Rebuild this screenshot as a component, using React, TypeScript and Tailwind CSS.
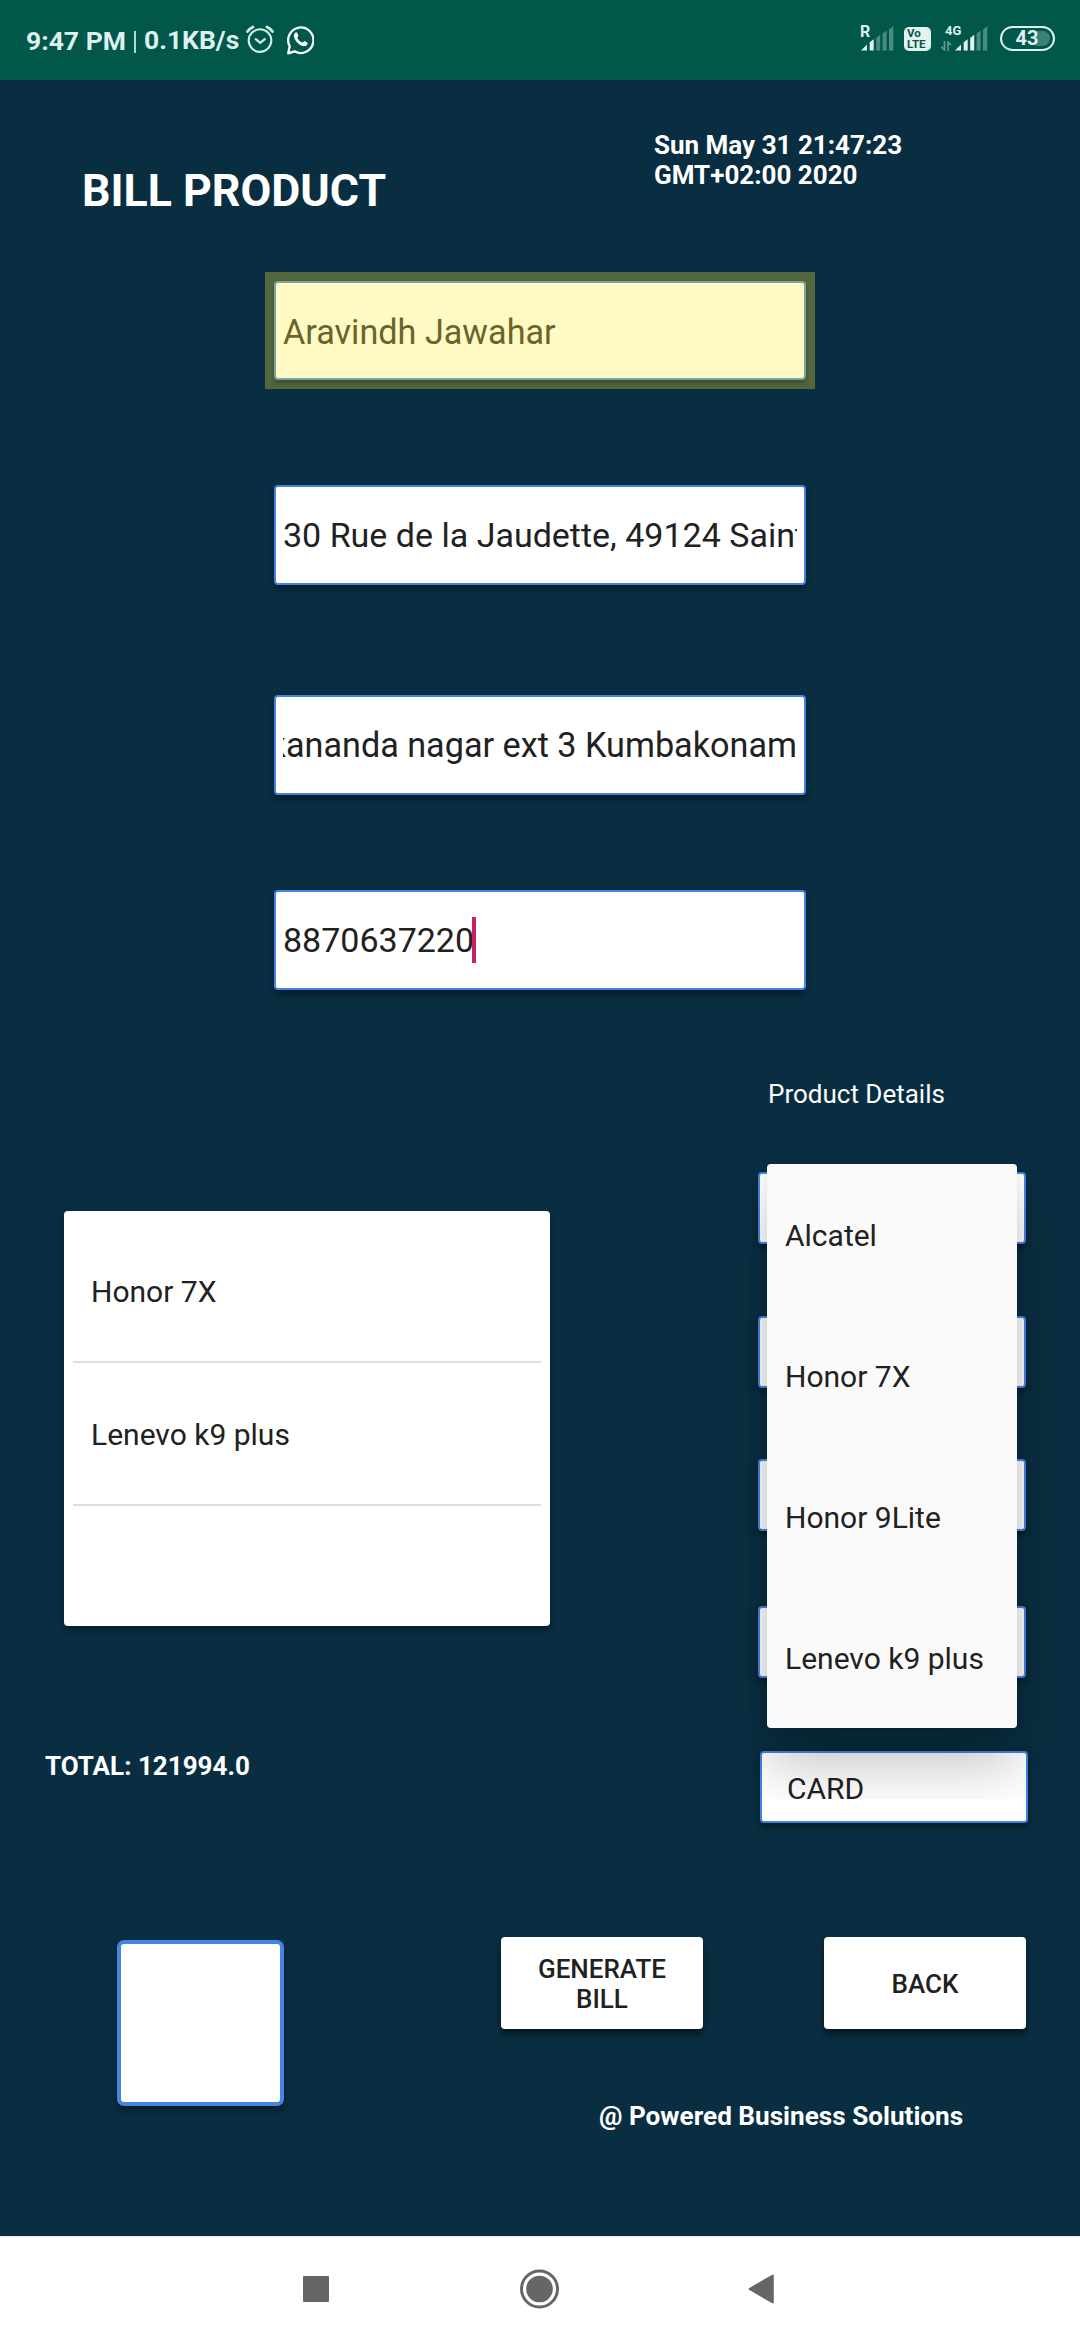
import React from "react";

const ROBOTO = "font-[Roboto,'Noto_Sans',sans-serif]";

function AlarmIcon() {
  return (
    <svg className="block h-7 w-7" viewBox="0 0 28 28" fill="none" stroke="#cdeee6" strokeWidth="2.1" strokeLinecap="round" strokeLinejoin="round">
      <circle cx="14" cy="15.6" r="11.3" />
      <path d="M9.8 14.2l4.4 3.6 4.6-3.6" strokeWidth="2.3" />
      <path d="M1.5 6.5Q3.5 3.6 7 2M26.5 6.5Q24.5 3.6 21 2" strokeWidth="2.8" />
    </svg>
  );
}

function WhatsAppIcon() {
  return (
    <svg className="block h-[30px] w-7" viewBox="0 0 28 30" fill="none">
      <path d="M2.2 28.4l1.500-7.200A12.600 12.800 0 1 1 8.600 26.300z" stroke="#fff" strokeWidth="2.3" strokeLinejoin="round" />
      <path d="M9.3 7.8c.9-.8 1.7-.5 2 .3l1 2.3c.3.8-1 1.8-1 2.3.8 2.1 3 4.2 5.2 4.9.7 0 1.500-1.800 2.200-1.500l2.500 1.300c1.100.6-.2 2.900-1.300 3.400-2 .8-5.300-.2-7.900-2.600-2.700-2.500-4.400-5.600-4.100-7.800.1-1.200.8-2.100 1.400-2.600z" fill="#fff" />
    </svg>
  );
}

function SignalBars({ lit }: { lit: number }) {
  const paths = [
    "M0 24.500L6 18.500V24.500z",
    "M8.700 24.500V16.200L12.700 13.200V24.500z",
    "M15.200 24.500V12L19.200 8.800V24.500z",
    "M21.600 24.500V7.500L25.600 4.500V24.500z",
    "M28 24.500V3.500L32.300 0V24.500z",
  ];
  return (
    <svg className="block h-[25px] w-[33px]" viewBox="0 0 33 25">
      {paths.map((d, i) => (
        <path key={d} d={d} fill={i < lit ? "#e4f2ef" : "#4a8b80"} />
      ))}
    </svg>
  );
}

function StatusBar() {
  return (
    <header className="flex h-20 bg-[#00574a] pl-[26px] pr-[25px] text-[#dff1ed]">
      <div className="mt-[26px] flex h-[30px] whitespace-nowrap text-[26.500px] font-bold leading-[30px]">
        <span className="w-[100px]">9:47 PM</span>
        <span className="mx-[8px] mt-[5px] h-[22px] w-[2px] bg-[#b5d6cf]" />
        <span className="-mt-px w-[99px]">0.1KB/s</span>
      </div>
      <div className="ml-[3px] mt-[25px] flex gap-3">
        <AlarmIcon />
        <WhatsAppIcon />
      </div>
      <div className="ml-auto mt-[26px] flex h-[25px]">
        <div className="relative w-[33px]">
          <SignalBars lit={2} />
          <span className="absolute left-[-1px] top-[-2px] text-[16px] font-bold leading-4">R</span>
        </div>
        <div className="ml-[10px] mt-px flex h-6 w-[27px] flex-col rounded-[5px] bg-[#e4f2ef] pl-[3px] pt-px text-[11.500px] font-bold leading-[11px] text-[#00574a]">
          <span>Vo</span>
          <span>LTE</span>
        </div>
        <div className="relative ml-[10px] w-[47px] pl-[14px]">
          <SignalBars lit={3} />
          <span className="absolute left-[4px] top-[-2px] text-[13px] font-bold leading-[13px]">4G</span>
          <svg className="absolute left-0 top-[15px] h-[10px] w-[11px]" viewBox="0 0 11 10" fill="none" stroke="#5d9a90" strokeWidth="1.700">
            <path d="M3.500 0V9L.5 5.800M7 10V1L10 4" />
          </svg>
        </div>
        <div className="ml-[12px] flex w-[55px] items-center justify-center rounded-full border-[2.500px] border-[#dff1ed] p-[3px]">
          <div className="flex h-full w-full items-center justify-center rounded-full bg-[linear-gradient(90deg,transparent_70%,#3b8276_70%)] pr-px text-[20px] font-bold leading-[15px]">
            43
          </div>
        </div>
      </div>
    </header>
  );
}

const boxShadow = "shadow-[0_4px_6px_rgba(0,0,0,0.4)]";

function Field({ children, align = "justify-start" }: { children: React.ReactNode; align?: string }) {
  return (
    <div className={`h-[100px] w-[532px] rounded-[4px] border-2 border-[#4583e6] bg-white px-[7px] text-[#212121] ${boxShadow}`}>
      <div className={`flex h-full items-center overflow-hidden whitespace-nowrap text-[34px] leading-[46px] ${align}`}>{children}</div>
    </div>
  );
}

function Spinner({ children, className }: { children?: React.ReactNode; className: string }) {
  return (
    <div className={`h-[72px] w-[268px] rounded-[4px] border-2 border-[#4583e6] bg-white ${boxShadow} ${className}`}>{children}</div>
  );
}

const options = ["Alcatel", "Honor 7X", "Honor 9Lite", "Lenevo k9 plus"];
const cart = ["Honor 7X", "Lenevo k9 plus"];

export default function App() {
  return (
    <div className={`flex h-[2340px] w-[1080px] flex-col overflow-hidden bg-[#092e41] text-white ${ROBOTO}`}>
      <StatusBar />

      <main className="flex h-[2156px] flex-col">
        <div className="flex h-[192px] justify-between">
          <h1 className="ml-[82px] mt-[85px] text-[44.700px] font-bold leading-[52px]">BILL PRODUCT</h1>
          <p className="mt-[50px] w-[426px] text-[26px] font-bold leading-[30px]">
            Sun May 31 21:47:23
            <br />
            GMT+02:00 2020
          </p>
        </div>

        <form className="flex flex-col items-center">
          <div className="h-[117px] w-[550px] bg-[#53663e] p-[9px]">
            <div className="flex h-[99px] items-center rounded-[4px] border-2 border-[#7ba5a5] bg-[#fff9c4] px-[7px] pt-[2px] text-[34.200px] leading-[46px] text-[#6b6429] shadow-[0_3px_5px_rgba(0,0,0,0.25)]">
              Aravindh Jawahar
            </div>
          </div>
          <div className="mt-24">
            <Field>30 Rue de la Jaudette, 49124 Saint</Field>
          </div>
          <div className="mt-[110px]">
            <Field align="justify-end">
              <span className="text-[34.200px]">Vivekananda nagar ext 3 Kumbakonam</span>
            </Field>
          </div>
          <div className="mt-[95px]">
            <Field>
              8870637220
              <span className="-ml-[2px] h-[46px] w-1 bg-[#cc1f61]" />
            </Field>
          </div>
        </form>

        <div className="mt-[88px] flex h-[859px] justify-between pr-[52px]">
          <section className="pl-[45px] pt-[133px]">
            <ul className={`ml-[19px] h-[415px] w-[486px] rounded-[4px] bg-white px-[9px] pt-[9px] text-[30px] text-[#212121] ${boxShadow}`}>
              {cart.map((item) => (
                <li key={item} className="flex h-[143px] items-center border-b-2 border-[#dedede] pl-[18px] pt-[2px]">
                  {item}
                </li>
              ))}
            </ul>
            <p className="mt-[125px] text-[26px] font-bold leading-[30px]">TOTAL: 121994.0</p>
          </section>

          <section className="relative w-[270px]">
            <h2 className="ml-[10px] mt-px text-[26px] leading-[30px]">Product Details</h2>
            <Spinner className="mt-[63px]" />
            <Spinner className="mt-[72px]" />
            <Spinner className="mt-[71px]" />
            <Spinner className="mt-[75px]" />
            <Spinner className="ml-[2px] mt-[73px] pl-[25px] pt-[18px] text-[30px] leading-9 text-[#212121]">CARD</Spinner>
            <ul className="absolute left-[9px] top-[86px] w-[250px] rounded-[4px] bg-[#fafafa] pl-[18px] text-[30px] text-[#212121] shadow-[0_38px_60px_rgba(0,0,0,0.23),0_0_10px_rgba(0,0,0,0.07)] [clip-path:inset(-40px_-46px_-71px_-22px)]">
              {options.map((item) => (
                <li key={item} className="flex h-[141px] items-center whitespace-nowrap pt-[2px]">
                  {item}
                </li>
              ))}
            </ul>
          </section>
        </div>

        <div className="flex h-[160px] items-start pl-[117px]">
          <div className={`mt-[3px] h-[166px] w-[167px] rounded-[7px] border-[4px] border-[#4583e6] bg-white ${boxShadow}`} />
          <button className="ml-[217px] flex h-[92px] w-[202px] items-center justify-center rounded-[4px] bg-white pt-[2px] text-[26px] font-medium leading-[30px] text-[#212121] shadow-[0_5px_6px_rgba(0,0,0,0.5)]">
            GENERATE
            <br />
            BILL
          </button>
          <button className="ml-[121px] flex h-[92px] w-[202px] items-center justify-center rounded-[4px] bg-white pt-[2px] text-[26px] font-medium leading-[30px] text-[#212121] shadow-[0_5px_6px_rgba(0,0,0,0.5)]">
            BACK
          </button>
        </div>

        <footer className="mb-[105px] mt-auto pl-[599px] text-[26.150px] font-bold leading-[30px]">@ Powered Business Solutions</footer>
      </main>

      <nav className="flex h-[104px] items-center border-t border-[#e8e8e8] bg-white pl-[303px]">
        <svg className="block h-[26px] w-[26px]" viewBox="0 0 26 26">
          <rect width="26" height="26" rx="1" fill="#666" />
        </svg>
        <svg className="ml-[191px] block h-10 w-10" viewBox="0 0 40 40">
          <circle cx="19.500" cy="20" r="18" fill="none" stroke="#666" strokeWidth="3" />
          <circle cx="19.500" cy="20" r="13.300" fill="#666" />
        </svg>
        <svg className="ml-[188px] block h-[30px] w-[26px]" viewBox="0 0 26 30">
          <path d="M1.500 15L24.800 1.500V28.500z" fill="#666" stroke="#666" strokeWidth="2" strokeLinejoin="round" />
        </svg>
      </nav>
    </div>
  );
}
